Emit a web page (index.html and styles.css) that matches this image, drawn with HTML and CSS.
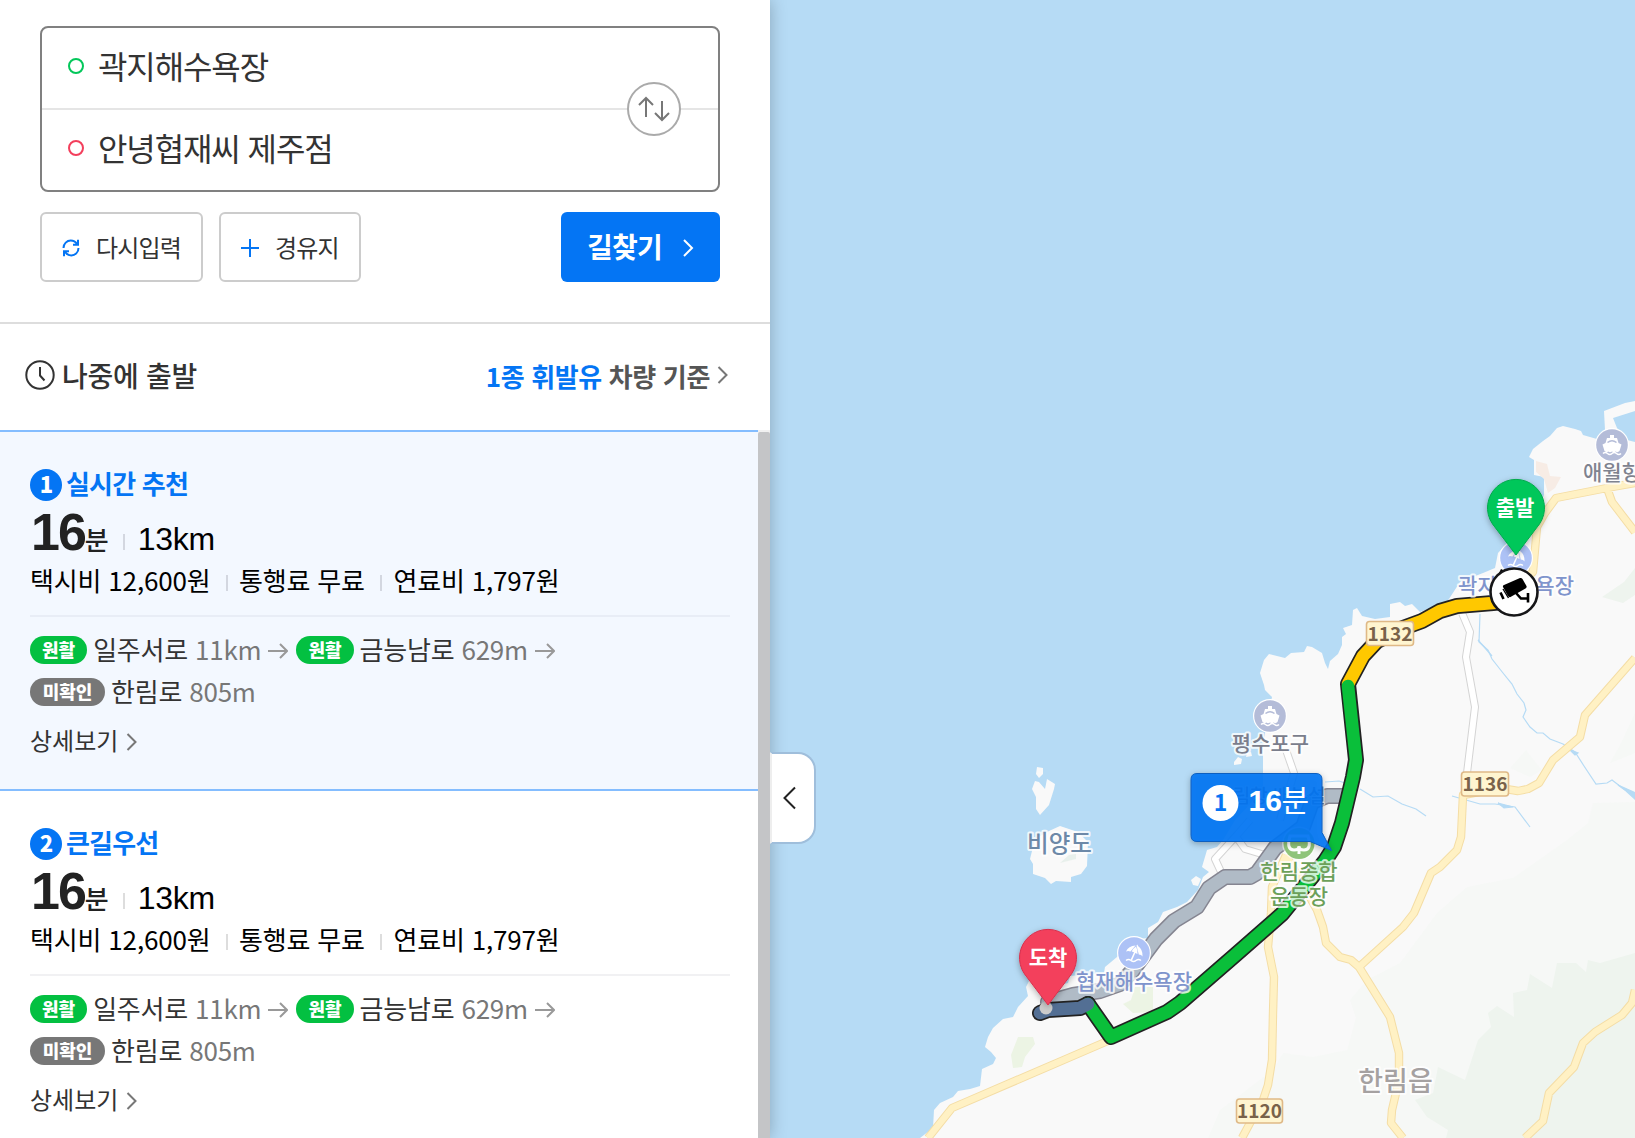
FILE: index.html
```html
<!DOCTYPE html>
<html lang="ko">

<head>
    <meta charset="UTF-8">
    <meta name="viewport" content="width=device-width, initial-scale=1.0">

    <link rel="stylesheet" href="styles.css">
    <title>길찾기</title>
</head>

<body>

    <div id="panel">
        <!-- 출발지 / 도착지 입력 -->
        <div class="search">
            <div class="search_box">
                <div class="search_row"><i class="ring start"></i><span>곽지해수욕장</span></div>
                <div class="search_row"><i class="ring goal"></i><span>안녕협재씨 제주점</span></div>
                <button class="btn_swap">
                    <svg width="32" height="26" viewBox="0 0 32 26"><path d="M8 21V2M1 9l7-7 7 7M24 5v19M17 17l7 7 7-7" /></svg>
                </button>
            </div>

            <div class="search_btns">
                <button class="btn btn_reset">
                    <svg width="18" height="18" viewBox="0 0 18 18"><path d="M1.5 9C1.500 4.500 5 1.600 8.700 1.600c3 0 5 1.400 6.400 3.600M16 .8v5h-5M16.500 9C16.500 13.500 13 16.400 9.300 16.400c-3 0-5-1.400-6.400-3.600M2 17.200v-5h5" /></svg>
                    <span>다시입력</span>
                </button>
                <button class="btn btn_via">
                    <svg width="18" height="18" viewBox="0 0 18 18"><path d="M9 0v18M0 9h18" /></svg>
                    <span>경유지</span>
                </button>
                <button class="btn_find">
                    <span>길찾기</span>
                    <svg width="12" height="18" viewBox="0 0 12 18"><path d="M2 1l8 8-8 8" /></svg>
                </button>
            </div>
        </div>

        <div class="option">
            <div class="option_time">
                <svg width="30" height="30" viewBox="0 0 30 30"><circle cx="15" cy="15" r="13.700" /><path d="M15 7v8.500l4.500 5" /></svg>
                <span>나중에 출발</span>
            </div>
            <div class="option_car">
                <span><em>1종 휘발유</em> 차량 기준</span>
                <svg class="chev" width="11" height="18" viewBox="0 0 11 18"><path d="M1.500 1l8 8-8 8" /></svg>
            </div>
        </div>

        <!-- 경로 목록 -->
        <div class="scroll">
            <div class="list">
                <div class="route on">
                    <div class="route_title"><b class="num">1</b><span>실시간 추천</span></div>
                    <div class="route_time"><strong>16</strong><span class="min">분</span><i class="bar"></i><span class="km">13km</span></div>
                    <div class="route_cost">택시비 12,600원<i class="bar"></i>통행료 무료<i class="bar"></i>연료비 1,797원</div>
                    <div class="route_path">
                        <div class="path_line">
                            <span class="tag green">원활</span><span class="name">일주서로 <em>11km</em></span>
                            <svg class="arrow" width="20" height="16" viewBox="0 0 20 16"><path d="M0 8h19M12 1l7 7-7 7" /></svg>
                            <span class="tag green">원활</span><span class="name">금능남로 <em>629m</em></span>
                            <svg class="arrow" width="20" height="16" viewBox="0 0 20 16"><path d="M0 8h19M12 1l7 7-7 7" /></svg>
                        </div>
                        <div class="path_line">
                            <span class="tag gray">미확인</span><span class="name">한림로 <em>805m</em></span>
                        </div>
                    </div>
                    <div class="route_more">
                        <span>상세보기</span>
                        <svg class="chev" width="11" height="18" viewBox="0 0 11 18"><path d="M1.500 1l8 8-8 8" /></svg>
                    </div>
                </div>

                <div class="route">
                    <div class="route_title"><b class="num">2</b><span>큰길우선</span></div>
                    <div class="route_time"><strong>16</strong><span class="min">분</span><i class="bar"></i><span class="km">13km</span></div>
                    <div class="route_cost">택시비 12,600원<i class="bar"></i>통행료 무료<i class="bar"></i>연료비 1,797원</div>
                    <div class="route_path">
                        <div class="path_line">
                            <span class="tag green">원활</span><span class="name">일주서로 <em>11km</em></span>
                            <svg class="arrow" width="20" height="16" viewBox="0 0 20 16"><path d="M0 8h19M12 1l7 7-7 7" /></svg>
                            <span class="tag green">원활</span><span class="name">금능남로 <em>629m</em></span>
                            <svg class="arrow" width="20" height="16" viewBox="0 0 20 16"><path d="M0 8h19M12 1l7 7-7 7" /></svg>
                        </div>
                        <div class="path_line">
                            <span class="tag gray">미확인</span><span class="name">한림로 <em>805m</em></span>
                        </div>
                    </div>
                    <div class="route_more">
                        <span>상세보기</span>
                        <svg class="chev" width="11" height="18" viewBox="0 0 11 18"><path d="M1.500 1l8 8-8 8" /></svg>
                    </div>
                </div>
            </div>
            <div class="scrollbar"><div class="thumb"></div></div>
        </div>

        <button class="btn_fold">
            <svg width="13" height="24" viewBox="0 0 13 24"><path d="M12 1.500L1.500 12 12 22.500" /></svg>
        </button>
    </div>

    <!-- 지도 -->
    <svg id="map" width="865" height="1138" viewBox="770 0 865 1138">
        <defs>
            <symbol id="ship" viewBox="-17 -17 34 34">
                <circle r="17" fill="#fff" />
                <circle r="15.800" fill="#b4bcd8" />
                <path fill="#fff" d="M-2-10h4v3h3l1.500 5 3 1.500L7.500 6q-2 2-3.700.5Q2 8 0 6.500-2 8-3.800 6.500-5.500 8-7.500 6L-9.500-.5l3-1.500L-5-7h3z" />
                <path fill="none" stroke="#b4bcd8" stroke-width="1.500" d="M-4.500-2.500Q0-6 4.500-2.500" />
                <path fill="none" stroke="#fff" stroke-width="1.500" d="M-9 8.500q2.200-2 4.500 0t4.500 0 4.500 0 4.500 0" />
            </symbol>
            <symbol id="beach" viewBox="-17 -17 34 34">
                <circle r="17" fill="#fff" />
                <circle r="15.800" fill="#adc2f6" />
                <path fill="#fff" d="M-8-1.500Q-5.500-7 1.500-7.500L-3.500-1.500Q-6-2.500-8-1.500zM2.500-7.500L3.500-8.500 4-7Q9-3.500 8.500 3.500 7.500 1.500 4.800 1.500zM2-6.500Q4-2.500 3.500 1L1.300 0-2 7.500-3.500 7 0-.8-2.300-1.600Q-1-4.500 2-6.500z" />
                <path fill="none" stroke="#fff" stroke-width="1.500" d="M-8 7.500q2.500-2 5 0t5 0 5 0" />
            </symbol>
            <filter id="shadow" x="-30%" y="-30%" width="160%" height="160%">
                <feDropShadow dx="0" dy="2" stdDeviation="3" flood-opacity="0.3" />
            </filter>
        </defs>

        <rect x="770" width="865" height="1138" fill="#b6dbf5" />

        <!-- 육지 -->
        <path class="land" d="M920 1138L933 1128 934 1110 940 1103 953 1097 958 1091 970 1089 980 1086 982 1069 993 1064 996 1058 991 1052 985 1047 988 1037 993 1028 1003 1019 1013 1017 1018 1007 1028 996 1026 987 1032 975 1060 985 1068 983 1070 976 1104 973 1105 967 1117 957 1130 940 1148 938 1148 928 1158 922 1163 912 1177 907 1187 902 1198 890 1203 877 1209 872 1202 867 1207 850 1217 847 1223 840 1235 820 1263 790 1263 747 1267 720 1272 697 1265 690 1264 685 1260 673 1264 660 1269 654 1285 658 1291 653 1304 652 1307 646 1312 647 1322 653 1325 663 1328 669 1330 661 1338 654 1342 645 1342 637 1346 634 1343 628 1352 625 1353 610 1357 608 1362 616 1375 619 1390 617 1390 604 1400 602 1405 606 1412 604 1420 612 1447 602 1460 582 1483 573 1495 568 1498 553 1510 540 1533 520 1544 495 1544 477 1534 475 1534 460 1529 457 1533 449 1543 441 1550 436 1557 428 1563 426 1575 429 1581 431 1583 435 1597 439 1605 430 1604 411 1625 403 1635 401V411L1613 418 1617 428 1627 440 1635 442V1138z" />
        <path class="land" d="M1037 767l6 1v6l-4 4-3-4zM1035 781l4 1 6 7 2-10 8 5-1 5-5 16-9 10-4-6v-12l-4-8z" />
        <path class="land" d="M1060 826l18 6 10 10-1 24-6 8-10 3v5l-15-1-5 3-6-6-12-4v-10l-3-5 5-20 14-8z" />
        <path class="land" d="M1191 880l5-4 5 3-3 7-5-1zM1234 762l4-5 4 2-1 5-7 1zM1247 753l4-1 1 4-6 1z" />

        <!-- 녹지 -->
        <path fill="#f6f8f6" d="M1635 802L1593 803 1588 823 1567 840 1513 878 1467 887 1437 913 1400 963 1367 980 1350 1000 1356 1018 1347 1050 1313 1057 1283 1053 1273 1070 1220 1110 1208 1138H1635zM1510 768l16-18 16 20-12 7zM1610 763l25-10v-40l-14 30z" />
        <path fill="#eef4ee" d="M1635 953L1600 963 1588 960 1586 972 1576 963 1557 963 1552 988 1530 974 1527 990 1513 993 1514 1017 1497 1006 1488 1013 1491 1027 1478 1040 1465 1080 1438 1067 1433 1093 1415 1100 1427 1117 1448 1130 1446 1138H1635zM1602 597l22-15 11-14v27l-12 8z" />
        <path fill="#ecf4e4" d="M1018 1037h15l2 7-10 13-3 10-9 1-2-13zM1135 987h18v25l-20 1-10-9 8-4z" />
        <path fill="#e8f0ec" d="M1060 863l9-8 7-1v5z" />
        <path fill="#f7ece5" d="M1536 461l11 3 3 12 11 1-6 11-7 5-4-14-8-7z" />

        <!-- 하천 -->
        <g class="river">
            <path d="M1480 614l-1 28 9 8 4 9 11 14 9 11 5 10 7 9 2 7-3 7 7 10 7 6h6l7 6 13 5 12 8 9 14 12 18 11-1 5-3 13 10M1360 789l13 8 15-1 14 8 14 5 10 7M1452 796l28 8h15l20 3 15 20M1325 782l14-1 12 4" />
            <path class="water" d="M1618 785l7 5 11 10v-7zM1498 803l15 4-9 1zM1478 640l14 16-6-7zM1570 750l8 3-3 2z" />
        </g>

        <!-- 도로 -->
        <g class="road white_line">
            <path d="M1462 613L1470 632 1466 657 1475 707 1467 773M1286 750L1294 773 1280 820M1250 820L1237 835 1215 859 1222 874M1237 838L1245 849 1265 855" />
        </g>
        <g class="road white">
            <path d="M1462 613L1470 632 1466 657 1475 707 1467 773M1286 750L1294 773 1280 820M1250 820L1237 835 1215 859 1222 874M1237 838L1245 849 1265 855" />
        </g>
        <g class="road yellow_line">
            <path d="M1635 658L1585 715 1580 737 1553 760 1539 783 1528 789 1518 791 1500 788 1463 795 1461 837 1457 850 1440 867 1431 873 1414 913 1403 927 1359 967M1286 855L1300 880 1317 910 1323 927 1326 943 1340 957 1351 960 1359 967 1390 1017 1399 1053 1399 1080 1392 1110 1391 1123 1403 1138M1286 855L1272 887 1271 913 1268 947 1274 977 1273 1013 1272 1060 1268 1085 1263 1100 1250 1123 1242 1138M1635 990L1632 1003 1622 1015 1595 1032 1583 1043 1574 1067 1549 1093 1543 1121 1525 1138M1500 600L1533 572 1537 527 1545 513 1556 498 1607 488 1635 483M1607 488L1612 502 1635 532M928 1138L952 1108 1110 1040" />
        </g>
        <g class="road yellow">
            <path d="M1635 658L1585 715 1580 737 1553 760 1539 783 1528 789 1518 791 1500 788 1463 795 1461 837 1457 850 1440 867 1431 873 1414 913 1403 927 1359 967M1286 855L1300 880 1317 910 1323 927 1326 943 1340 957 1351 960 1359 967 1390 1017 1399 1053 1399 1080 1392 1110 1391 1123 1403 1138M1286 855L1272 887 1271 913 1268 947 1274 977 1273 1013 1272 1060 1268 1085 1263 1100 1250 1123 1242 1138M1635 990L1632 1003 1622 1015 1595 1032 1583 1043 1574 1067 1549 1093 1543 1121 1525 1138M1500 600L1533 572 1537 527 1545 513 1556 498 1607 488 1635 483M1607 488L1612 502 1635 532M928 1138L952 1108 1110 1040" />
        </g>

        <!-- 다른 경로 -->
        <path class="line other_line" d="M1342 796L1327 796 1312 802 1303 827 1275 848 1257 873 1250 877 1225 877 1209 888 1197 907 1174 921 1156 939 1133 970 1120 984 1100 991 1073 995 1048 1002" />
        <path class="line other" d="M1342 796L1327 796 1312 802 1303 827 1275 848 1257 873 1250 877 1225 877 1209 888 1197 907 1174 921 1156 939 1133 970 1120 984 1100 991 1073 995 1048 1002" />

        <!-- 선택한 경로 -->
        <path class="line line_bg" d="M1513 601L1493 603 1457 606 1440 611 1422 621 1403 628 1377 641 1363 656 1348 684 1356 760 1353 777 1342 823 1334 847 1325 861 1282 914 1233 957 1180 1003 1167 1012 1111 1037 1088 1004" />
        <path class="line line_bg" d="M1088 1004L1080 1008 1048 1010 1040 1013" />
        <path class="line slow" d="M1513 601L1493 603 1457 606 1440 611 1422 621 1403 628 1377 641 1363 656 1348 684" />
        <path class="line fast" d="M1348 686L1356 760 1353 777 1342 823 1334 847 1325 861 1282 914 1233 957 1180 1003 1167 1012 1111 1037 1088 1004" />
        <path class="line unknown" d="M1088 1004L1080 1008 1048 1010 1040 1013" />
        <circle cx="1046" cy="1008" r="6.500" fill="#ccc" />

        <!-- 지명 -->
        <g class="place">
            <use href="#ship" x="1595" y="428" width="34" height="34" />
            <text x="1612" y="480" fill="#7f838f">애월항</text>
            <use href="#ship" x="1253" y="699" width="34" height="34" />
            <text x="1270.500" y="751" fill="#7b7e8c">평수포구</text>
            <use href="#beach" x="1499" y="541" width="34" height="34" />
            <text x="1516" y="593" fill="#7f94cc">곽지해수욕장</text>
            <use href="#beach" x="1117" y="936" width="34" height="34" />
            <text x="1134" y="988.500" fill="#7f94cc">협재해수욕장</text>
            <text class="facility" x="1325.500" y="803">한림항 배부설</text>
            <circle cx="1299" cy="843.500" r="17" fill="#fff" opacity=".6" />
            <circle cx="1299" cy="843.500" r="15.500" fill="#8fc47a" />
            <path fill="none" stroke="#fff" stroke-width="3" d="M1290 836q-4 14 4 14 5 0 5-4 0 4 5 4 8 0 4-14zM1299 846v8" />
            <text x="1299" y="879" class="park">한림종합</text>
            <text x="1299" y="904" class="park">운동장</text>
        </g>
        <text class="area island" x="1059.500" y="852">비양도</text>
        <text class="area" x="1395.500" y="1090.500">한림읍</text>

        <g class="shield">
            <rect x="1366.500" y="621.500" width="47" height="24" rx="3" /><text x="1390" y="640.500">1132</text>
            <rect x="1461.500" y="772" width="47" height="24" rx="3" /><text x="1485" y="791">1136</text>
            <rect x="1236.500" y="1099" width="46" height="24" rx="3" /><text x="1259.500" y="1118">1120</text>
        </g>

        <!-- 출발 / 도착 핀 -->
        <g class="pin">
            <path filter="url(#shadow)" fill="#03c75a" stroke="#02a94c" d="M1516 555L1492.500 524A28.500 28.500 0 1 1 1539.500 524z" />
            <text x="1515" y="515">출발</text>
            <path filter="url(#shadow)" fill="#f33f5c" stroke="#d8304c" d="M1048 1005L1024.500 974A28.500 28.500 0 1 1 1071.500 974z" />
            <text x="1048" y="965">도착</text>
        </g>

        <!-- CCTV -->
        <g class="cctv">
            <path d="M1499 573l2-4 2 1 1 5z" />
            <circle cx="1514" cy="592" r="23.500" />
            <path d="M1504 585l16-7q1.500-.5 2.500 1l4 7q.5 1.500-1 2.500l-15 8.500q-1.500.5-2.500-1l-5-9q-.5-1.500 1-2z" />
            <path class="cctv_line" d="M1503 589l5.500 9" />
            <path class="cctv_line wide" d="M1500.500 592.500l3 6.500M1516 593l5 5.500h7M1528 593v9.500" />
        </g>

        <!-- 소요시간 말풍선 -->
        <g class="bubble">
            <path filter="url(#shadow)" d="M1197 773.500h119q6 0 6 6v53l9.500 18-21.500-9h-113q-6 0-6-6v-56q0-6 6-6z" />
            <circle cx="1220.500" cy="803" r="18" />
            <text class="bubble_num" x="1220.500" y="810.500">1</text>
            <text class="bubble_time" x="1248.500" y="811">16</text>
            <text class="bubble_min" x="1281.500" y="811">분</text>
        </g>
    </svg>

</body>

</html>
```

FILE: styles.css
```css
* {
    box-sizing: border-box;
}

body {
    display: flex;
    margin: 0;
    height: 1138px;
    overflow: hidden;
    background-color: #fff;
    color: #333;
    font-family: "Noto Sans CJK KR", "Noto Sans", sans-serif;
}

button {
    padding: 0;
    font-family: inherit;
    color: inherit;
}

svg {
    flex: none;
}

em, i {
    font-style: normal;
}

#panel {
    position: relative;
    z-index: 1;
    flex: none;
    display: flex;
    flex-direction: column;
    width: 770px;
    height: 1138px;
    background-color: #fff;
    box-shadow: 0 0 16px rgba(0, 0, 0, 0.25);
}

/* search */

.search {
    padding: 26px 50px 40px 40px;
    border-bottom: 2px solid #ddd;
}

.search_box {
    position: relative;
    border: 2px solid #808080;
    border-radius: 8px;
}

.search_row {
    display: flex;
    align-items: center;
    gap: 14px;
    height: 80px;
    padding: 0 0 4px 26px;
    font-size: 32px;
    letter-spacing: -1.1px;
}

.search_row span {
    margin-bottom: 3px;
}

.search_row + .search_row {
    height: 82px;
    border-top: 2px solid #e5e5e5;
}

.ring {
    width: 16px;
    height: 16px;
    border: 2px solid #03c75a;
    border-radius: 50%;
}

.goal {
    border-color: #f33f5c;
}

.btn_swap {
    position: absolute;
    top: 54px;
    right: 37px;
    display: flex;
    align-items: center;
    justify-content: center;
    width: 54px;
    height: 54px;
    border: 2px solid #aaa;
    border-radius: 50%;
    background-color: #fff;
}

.btn_swap svg {
    fill: none;
    stroke: #777;
    stroke-width: 2;
}

.search_btns {
    display: flex;
    margin-top: 20px;
    height: 70px;
}

.search_btns span {
    margin-bottom: 2px;
}

.btn {
    display: flex;
    align-items: center;
    gap: 16px;
    margin-right: 16px;
    padding-left: 20px;
    border: 2px solid #ccc;
    border-radius: 6px;
    background-color: #fff;
    font-size: 24px;
    letter-spacing: -0.8px;
}

.btn svg {
    margin-top: 1px;
    fill: none;
    stroke: #0475f4;
    stroke-width: 2;
}

.btn_reset {
    width: 163px;
}

.btn_via {
    width: 142px;
}

.btn_find {
    display: flex;
    align-items: center;
    gap: 20px;
    width: 159px;
    margin-left: auto;
    padding-left: 26px;
    border: 0;
    border-radius: 6px;
    background-color: #0475f4;
    color: #fff;
    font-size: 28px;
    font-weight: bold;
    letter-spacing: -0.8px;
}

.btn_find svg {
    margin-top: 1px;
    fill: none;
    stroke: #fff;
    stroke-width: 2;
}

/* option */

.option {
    display: flex;
    align-items: center;
    justify-content: space-between;
    height: 106px;
    padding: 0 42px 0 25px;
}

.option span {
    margin-bottom: 4px;
}

.option_time {
    display: flex;
    align-items: center;
    gap: 7px;
    font-size: 28px;
    font-weight: 500;
    letter-spacing: -0.3px;
}

.option_time svg {
    fill: none;
    stroke: #333;
    stroke-width: 2;
    margin-top: -4px;
}

.option_car {
    display: flex;
    align-items: center;
    gap: 7px;
    font-size: 26px;
    font-weight: bold;
    letter-spacing: -0.35px;
    color: #555;
}

.option_car em {
    color: #0475f4;
}

.option_car svg {
    margin-top: -4px;
}

.chev {
    fill: none;
    stroke: #777;
    stroke-width: 2;
}

/* list */

.scroll {
    display: flex;
    height: 708px;
    overflow: hidden;
}

.list {
    flex: 1;
}

.scrollbar {
    width: 12px;
    padding-top: 2px;
    background-color: #f1f1f1;
}

.thumb {
    height: 720px;
    border-radius: 2px;
    background-color: #c4c5c7;
}

.route {
    padding: 37px 28px 29px 30px;
}

.on {
    border-top: 2px solid #84bdff;
    border-bottom: 2px solid #84bdff;
    background-color: #f3f8ff;
}

.route_title {
    display: flex;
    align-items: center;
    gap: 4px;
    height: 32px;
    color: #0475f4;
    font-size: 26px;
    font-weight: bold;
    letter-spacing: -0.8px;
}

.route_title span {
    margin-bottom: 5px;
}

.num {
    width: 32px;
    height: 32px;
    border-radius: 50%;
    background-color: #0475f4;
    color: #fff;
    font-size: 22px;
    line-height: 29px;
    text-align: center;
}

.route_time {
    display: flex;
    align-items: baseline;
    height: 58px;
    padding-left: 1px;
    line-height: 62px;
    color: #222;
}

.route_time strong {
    font-family: "Liberation Sans", sans-serif;
    font-size: 52px;
    letter-spacing: -2px;
}

.min {
    font-size: 26px;
    font-weight: 500;
}

.km {
    color: #000;
    font-family: "Liberation Sans", sans-serif;
    font-size: 32px;
    letter-spacing: -0.3px;
}

.bar {
    display: inline-block;
    width: 2px;
    height: 16px;
    margin: 0 13px 0 14px;
    background-color: #ddd;
}

.on .bar {
    background-color: #d3d7e0;
}

.route_cost {
    height: 58px;
    border-bottom: 2px solid #f1f1f3;
    color: #000;
    font-size: 26px;
    letter-spacing: -0.17px;
    line-height: 42px;
}

.route_cost .bar {
    margin: 0 11.5px 0 15px;
}

.on .route_cost {
    border-color: #e8edf6;
}

.route_path {
    padding-top: 12px;
}

.path_line {
    display: flex;
    align-items: center;
    height: 42px;
    font-size: 26px;
    letter-spacing: -0.22px;
}

.name {
    margin-bottom: 4px;
}

.name em {
    color: #777;
}

.tag {
    height: 28px;
    margin-right: 6px;
    padding: 0 12px;
    border-radius: 14px;
    background-color: #777;
    color: #fff;
    font-size: 18px;
    font-weight: 900;
    letter-spacing: 0;
    line-height: 27px;
}

.gray {
    padding: 0 12.7px;
}

.green {
    background-color: #03c041;
}

.arrow {
    margin: 2px 8px 0 7px;
    fill: none;
    stroke: #999;
    stroke-width: 2;
}

.route_more {
    display: flex;
    align-items: center;
    gap: 8px;
    height: 36px;
    margin-top: 11px;
    font-size: 24px;
}

.route_more span {
    margin-bottom: 5px;
}

.route_more svg {
    margin-bottom: 1px;
}

.btn_fold {
    position: absolute;
    top: 752px;
    left: 770px;
    width: 46px;
    height: 92px;
    padding-top: 4px;
    border: 2px solid #9fbedb;
    border-left-color: #eee;
    border-radius: 0 18px 18px 0;
    background-color: #fff;
}

.btn_fold svg {
    margin-right: 7px;
    fill: none;
    stroke: #222;
    stroke-width: 2;
}

/* map */

#map {
    font-weight: 500;
}

.land {
    fill: #f9f9f9;
}

.river path {
    fill: none;
    stroke: #b6dbf5;
    stroke-width: 1.2;
}

.river .water {
    fill: #b6dbf5;
}

.road {
    fill: none;
    stroke-linejoin: round;
}

.white_line {
    stroke: #d4d4d4;
    stroke-width: 8;
}

.white {
    stroke: #fff;
    stroke-width: 6;
}

.yellow_line {
    stroke: #f4dda5;
    stroke-width: 8.4;
}

.yellow {
    stroke: #fff1c4;
    stroke-width: 6.4;
}

.line {
    fill: none;
    stroke-width: 12.6;
    stroke-linejoin: round;
    stroke-linecap: round;
}

.other_line {
    stroke: #858591;
    stroke-width: 16;
}

.other {
    stroke: #b0bbc6;
    stroke-width: 13;
}

.line_bg {
    stroke: #222;
    stroke-width: 16;
}

.slow {
    stroke: #ffc800;
}

.fast {
    stroke: #0abf3a;
}

.unknown {
    stroke: #536f94;
}

.place text, .area {
    font-size: 21px;
    text-anchor: middle;
    stroke: rgba(255, 255, 255, 0.8);
    stroke-width: 4px;
    stroke-linejoin: round;
    paint-order: stroke;
}

.place .park {
    fill: #6ca05a;
}

.place .facility {
    fill: #6e7180;
    font-size: 19px;
    text-anchor: end;
    stroke-width: 2px;
}

.area {
    font-size: 27px;
    fill: #a5a1a1;
}

.island {
    font-size: 23.5px;
    fill: #6d89a8;
}

.shield rect {
    fill: #fff5d0;
    stroke: #dfb987;
    stroke-width: 1.6;
}

.shield text {
    font-size: 19px;
    font-weight: bold;
    text-anchor: middle;
    fill: #79624a;
}

.pin text {
    fill: #fff;
    font-size: 21px;
    font-weight: bold;
    text-anchor: middle;
}

.cctv circle {
    fill: #fff;
    stroke: #161618;
    stroke-width: 2.6;
}

.cctv .cctv_line {
    fill: none;
    stroke: #000;
    stroke-width: 1.4;
}

.cctv .wide {
    stroke-width: 2.6;
}

.bubble path {
    fill: #0475f4;
    fill-opacity: 0.9;
    stroke: #0b5fc0;
}

.bubble circle {
    fill: #fff;
}

.bubble text {
    fill: #fff;
    font-size: 30px;
}

.bubble .bubble_num {
    fill: #0475f4;
    font-size: 23px;
    font-weight: bold;
    text-anchor: middle;
}

.bubble .bubble_time {
    font-family: "Liberation Sans", sans-serif;
    font-weight: bold;
}

.bubble .bubble_min {
    font-weight: 400;
}
```
